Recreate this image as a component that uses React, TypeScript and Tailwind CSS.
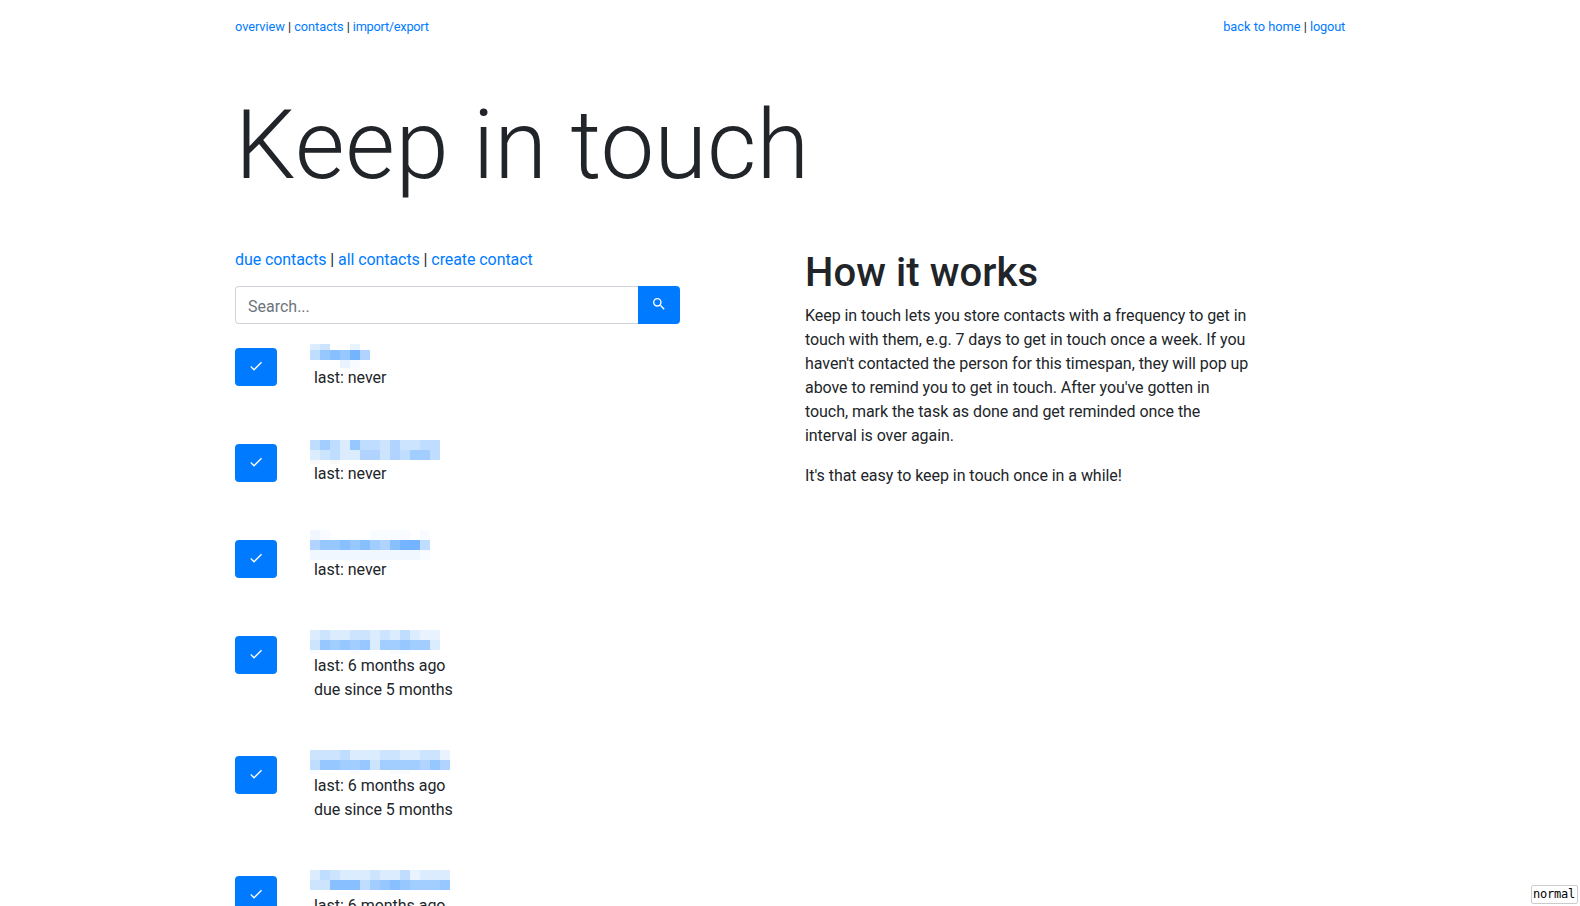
import React from 'react';

type Strip = { h: number; cells: string };
type Contact = { strips: Strip[]; gap: number; lines: string[] };

// One letter per 10px tile, from blank to the strongest blue.
const TONES: Record<string, string> = {
  '.': 'bg-transparent',
  g: 'bg-[#f8f8f9]',
  a: 'bg-[#f8fbff]',
  b: 'bg-[#f1f7ff]',
  B: 'bg-[#e9f3ff]',
  c: 'bg-[#dcecff]',
  d: 'bg-[#cde4ff]',
  e: 'bg-[#bfddff]',
  f: 'bg-[#b0d4ff]',
  h: 'bg-[#a2ceff]',
  i: 'bg-[#96c8ff]',
  j: 'bg-[#88c0ff]',
  k: 'bg-[#74b4ff]',
};

const due = ['last: 6 months ago', 'due since 5 months'];

const contacts: Contact[] = [
  { gap: 2, strips: [{ h: 6, cells: 'cd..B.' }, { h: 10, cells: 'eijikf' }, { h: 8, cells: '...Ba.' }], lines: ['last: never'] },
  { gap: 2, strips: [{ h: 10, cells: 'ehecieedfddee' }, { h: 10, cells: 'cdeccffdfehhe' }, { h: 4, cells: 'g.g..........' }], lines: ['last: never'] },
  { gap: -4, strips: [{ h: 10, cells: 'ba....aaaa.a' }, { h: 10, cells: 'fiijijhfjkke' }, { h: 10, cells: 'bbbbbbbbbbba' }], lines: ['last: never'] },
  { gap: 0, strips: [{ h: 10, cells: 'cdccddcdcecBB' }, { h: 10, cells: 'dihihichhihhc' }, { h: 4, cells: 'a...a...aa...' }], lines: due },
  { gap: 0, strips: [{ h: 10, cells: 'dddecccddccddB' }, { h: 10, cells: 'eiihhidhhhhfif' }, { h: 4, cells: 'a...a...aa....' }], lines: due },
  { gap: 0, strips: [{ h: 10, cells: 'cedcccdcceBccc' }, { h: 10, cells: 'ddjjjehijihhhi' }], lines: due },
];

function Icon({ d }: { d: string }) {
  return (
    <svg className="size-4" viewBox="0 0 24 24" fill="currentColor">
      <path d={d} />
    </svg>
  );
}

const CHECK = 'M21,7L9,19L3.5,13.5L4.91,12.09L9,16.17L19.59,5.59L21,7Z';
const MAGNIFY =
  'M9.5,3A6.5,6.5 0 0,1 16,9.5C16,11.11 15.41,12.59 14.44,13.73L14.71,14H15.5L20.5,19L19,20.5L14,15.5V14.71L13.73,14.44C12.59,15.41 11.11,16 9.5,16A6.5,6.5 0 0,1 3,9.5A6.5,6.5 0 0,1 9.5,3M9.5,5C7,5 5,7 5,9.5C5,12 7,14 9.5,14C12,14 14,12 14,9.5C14,7 12,5 9.5,5Z';

function Link({ children, className = '' }: { children: React.ReactNode; className?: string }) {
  return <a href="#" className={`text-[#007bff] ${className}`}>{children}</a>;
}

function HiddenName({ strips, gap }: { strips: Strip[]; gap: number }) {
  return (
    <div className="-ml-1 flex flex-col" style={{ paddingTop: Math.max(gap, 0), marginTop: Math.min(gap, 0), height: 24 - Math.min(gap, 0) }}>
      {strips.map((s, i) => (
        <div key={i} className="flex shrink-0" style={{ height: s.h }}>
          {s.cells.split('').map((c, j) => (
            <span key={j} className={`w-2.5 ${TONES[c]}`} />
          ))}
        </div>
      ))}
    </div>
  );
}

export default function App() {
  return (
    <div className="h-[906px] overflow-hidden bg-white font-[Roboto,sans-serif] text-base leading-6 text-[#212529]">
      <div className="mx-auto w-[1110px]">
        <header className="flex justify-between pt-4 text-[12.8px] leading-[22px]">
          <nav className="tracking-[-0.05px]">
            <Link>overview</Link> | <Link>contacts</Link> | <Link className="tracking-[-0.28px]">import/export</Link>
          </nav>
          <nav><Link>back to home</Link> | <Link className="tracking-[-0.2px]">logout</Link></nav>
        </header>
        <h1 className="mt-[50px] text-[96px] leading-[115px] font-light">
          <span className="tracking-[0.6px]">Keep</span> in touch
        </h1>
        <main className="mt-[45px] flex gap-[125px]">
          <section className="w-[445px]">
            <nav className="tracking-[-0.08px]"><Link>due contacts</Link> | <Link>all contacts</Link> | <Link>create contact</Link></nav>
            <form className="mt-3.5 flex h-[38px]">
              <input
                className="min-w-0 flex-1 rounded-l border border-r-0 border-[#ced4da] px-3 pt-2 pb-1 placeholder:text-[#6c757d] placeholder:opacity-100"
                placeholder="Search..."
              />
              <button type="button" className="flex w-[42px] justify-center rounded-r bg-[#007bff] pt-2.5 text-white">
                <Icon d={MAGNIFY} />
              </button>
            </form>
            <ul className="mt-[18px]">
              {contacts.map((c, i) => (
                <li key={i} className="mb-12 flex gap-[37px]">
                  <button className="mt-1.5 flex h-[38px] w-[42px] justify-center rounded bg-[#007bff] pt-2.5 text-white">
                    <Icon d={CHECK} />
                  </button>
                  <div>
                    <HiddenName strips={c.strips} gap={c.gap} />
                    {c.lines.map((l) => <p key={l} className="tracking-[-0.03px]">{l}</p>)}
                  </div>
                </li>
              ))}
            </ul>
          </section>
          <section className="w-[445px]">
            <h2 className="mt-px mb-[7px] text-[40px] leading-[48px] font-medium tracking-[0.08px]">How it works</h2>
            <p className="mb-4 tracking-[-0.055px]">
              Keep in touch lets you store contacts with a frequency to get in touch with them, e.g. 7 days to get in
              touch once a week. If you haven't contacted the person for this timespan, they will pop up above to remind
              you to get in touch. After you've gotten in touch, mark the task as done and get reminded once the interval
              is over again.
            </p>
            <p className="tracking-[-0.05px]">It's that easy to keep in touch once in a while!</p>
          </section>
        </main>
      </div>
      <div className="fixed right-0.5 bottom-0.5 flex h-[19px] w-[47px] justify-start rounded-xs border border-[#cccccc] bg-white pl-px font-['DejaVu_Sans_Mono',monospace] text-[12px] leading-[16px] tracking-[-0.2px] text-black">
        normal
      </div>
    </div>
  );
}
